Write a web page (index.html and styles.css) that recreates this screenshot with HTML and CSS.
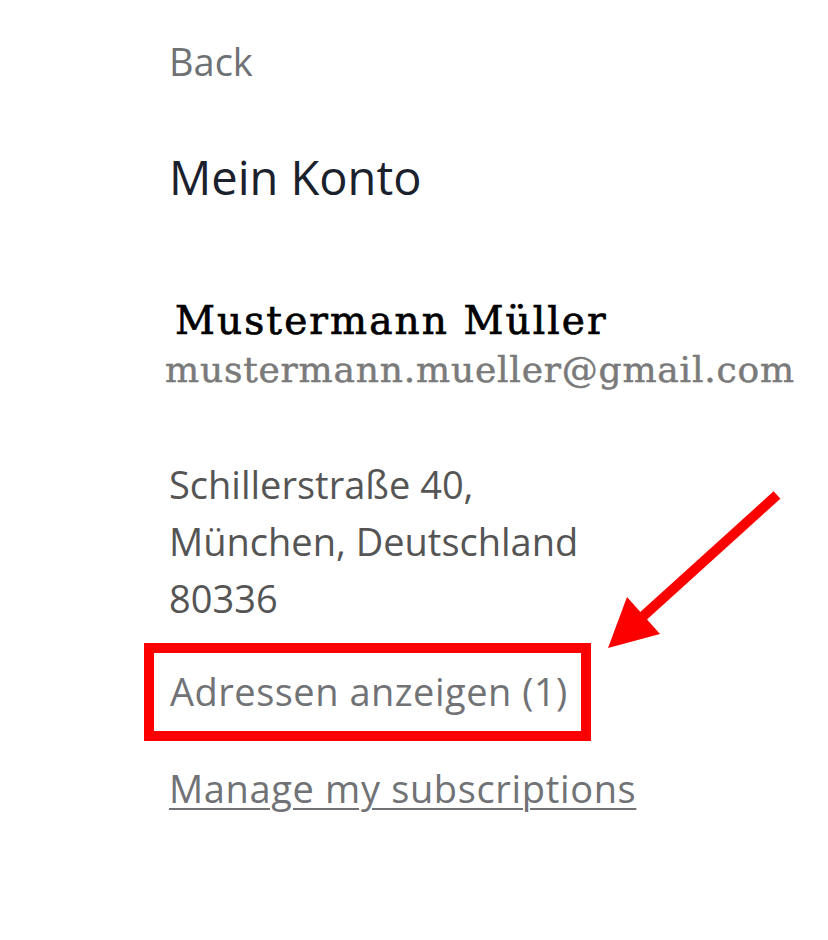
FILE: index.html
```html
<!DOCTYPE html>
<html lang="de">
<head>
<meta charset="utf-8">
<title>Mein Konto</title>
<link rel="stylesheet" href="styles.css">
</head>
<body>
<main class="page">
  <a class="back" href="#">Back</a>
  <h1 class="title">Mein Konto</h1>
  <section class="profile">
    <div class="name">Mustermann Müller</div>
    <div class="email">mustermann.mueller@gmail.com</div>
  </section>
  <address class="addr">
    <span class="addr-line">Schillerstraße 40,</span>
    <span class="addr-line">München, Deutschland</span>
    <span class="addr-line">80336</span>
  </address>
  <div class="addr-link-wrap">
    <a class="addr-link" href="#">Adressen anzeigen (1)</a>
  </div>
  <a class="manage" href="#">Manage my subscriptions</a>
</main>
<svg class="arrow" width="828" height="940" viewBox="0 0 828 940" aria-hidden="true">
  <line x1="777" y1="495" x2="640" y2="619" stroke="#fc0000" stroke-width="10"/>
  <polygon points="608,648 627,597 660,634" fill="#fc0000"/>
</svg>
</body>
</html>
```
FILE: styles.css
```css
html, body {
  margin: 0;
  padding: 0;
  background: #ffffff;
}

.page {
  display: flex;
  flex-direction: column;
  align-items: flex-start;
  padding: 33px 0 0 169px;
  font-family: "Open Sans", "DejaVu Sans", sans-serif;
}

.back {
  font-size: 38px;
  line-height: 57px;
  color: #6f7275;
  text-decoration: none;
}

.title {
  margin: 57px 0 0;
  font-size: 47px;
  line-height: 60px;
  font-weight: 400;
  color: #1a202c;
}

.profile {
  margin-top: 90px;
  display: flex;
  flex-direction: column;
}

.name {
  margin-left: 6px;
  font-family: "DejaVu Serif", "Liberation Serif", serif;
  font-size: 39px;
  line-height: 48px;
  letter-spacing: 2.1px;
  color: #000000;
  -webkit-text-stroke: 0.7px #000000;
}

.email {
  margin: 1px 0 0 -4px;
  font-family: "DejaVu Serif", "Liberation Serif", serif;
  font-size: 36px;
  line-height: 48px;
  letter-spacing: 0.8px;
  color: #7a7a7a;
  -webkit-text-stroke: 0.5px #7a7a7a;
}

.addr {
  margin-top: 62px;
  display: flex;
  flex-direction: column;
  font-style: normal;
  font-size: 38px;
  line-height: 57px;
  color: #555555;
}

.addr-link-wrap {
  margin: 16px 0 0 -25px;
}

.addr-link {
  display: inline-block;
  border: 10px solid #fc0000;
  padding: 0 13px 2px 16px;
  font-size: 38px;
  line-height: 76px;
  letter-spacing: 0.5px;
  color: #707275;
  text-decoration: none;
}

.manage {
  margin-top: 19px;
  font-size: 38px;
  line-height: 57px;
  letter-spacing: 0.65px;
  color: #707275;
  text-decoration: underline;
  text-decoration-thickness: 2px;
  text-underline-offset: 5px;
}

.arrow {
  position: absolute;
  left: 0;
  top: 0;
  pointer-events: none;
}
```
